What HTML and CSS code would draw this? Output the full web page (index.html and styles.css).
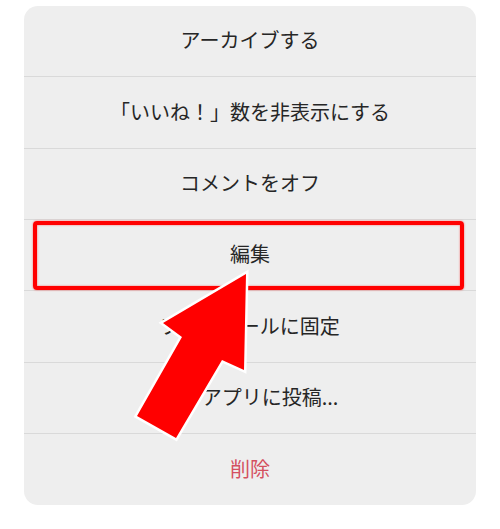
FILE: index.html
```html
<!DOCTYPE html>
<html lang="ja">
<head>
<meta charset="utf-8">
<title>Menu</title>
<link rel="stylesheet" href="styles.css">
</head>
<body>
<div class="stage">
  <div class="sheet">
    <div class="item">アーカイブする</div>
    <div class="item">「いいね！」数を非表示にする</div>
    <div class="item">コメントをオフ</div>
    <div class="item">編集</div>
    <div class="item">プロフィールに固定</div>
    <div class="item">他のアプリに投稿...</div>
    <div class="item danger">削除</div>
    <div class="highlight"></div>
  </div>
  <svg class="arrow" width="500" height="529" viewBox="0 0 500 529" xmlns="http://www.w3.org/2000/svg">
    <polygon points="246,274 244,370 222,360 176,438 137,416 182,337 163,323" fill="#ff0000" stroke="#ffffff" stroke-width="5" stroke-linejoin="miter" paint-order="stroke"/>
  </svg>
</div>
</body>
</html>
```

FILE: styles.css
```css
html, body {
  margin: 0;
  padding: 0;
  background: #ffffff;
}
body {
  font-family: "Noto Sans CJK JP", "Noto Sans", sans-serif;
}
.stage {
  position: relative;
  width: 500px;
  height: 529px;
  padding: 6px 24px 0;
  box-sizing: border-box;
}
.sheet {
  position: relative;
  height: 499px;
  background: #eeeeee;
  border-radius: 14px;
  display: grid;
  grid-template-rows: 70px 72px 71px 71px 72px 71px 72px;
  overflow: hidden;
}
.item {
  display: flex;
  align-items: center;
  justify-content: center;
  font-size: 20px;
  font-weight: 400;
  line-height: 24px;
  color: #262626;
  border-top: 1px solid #d9d9d9;
  box-sizing: border-box;
  padding-bottom: 2px;
}
.item:first-child {
  border-top: none;
}
.danger {
  color: #d4505f;
}
.highlight {
  position: absolute;
  left: 9px;
  top: 215px;
  width: 431px;
  height: 69px;
  box-sizing: border-box;
  border: 4px solid #ff0000;
  border-radius: 4px;
  box-shadow: 0 0 2px rgba(255, 0, 0, 0.6), inset 0 0 2px rgba(255, 0, 0, 0.6);
}
.arrow {
  position: absolute;
  left: 0;
  top: 0;
}
```
